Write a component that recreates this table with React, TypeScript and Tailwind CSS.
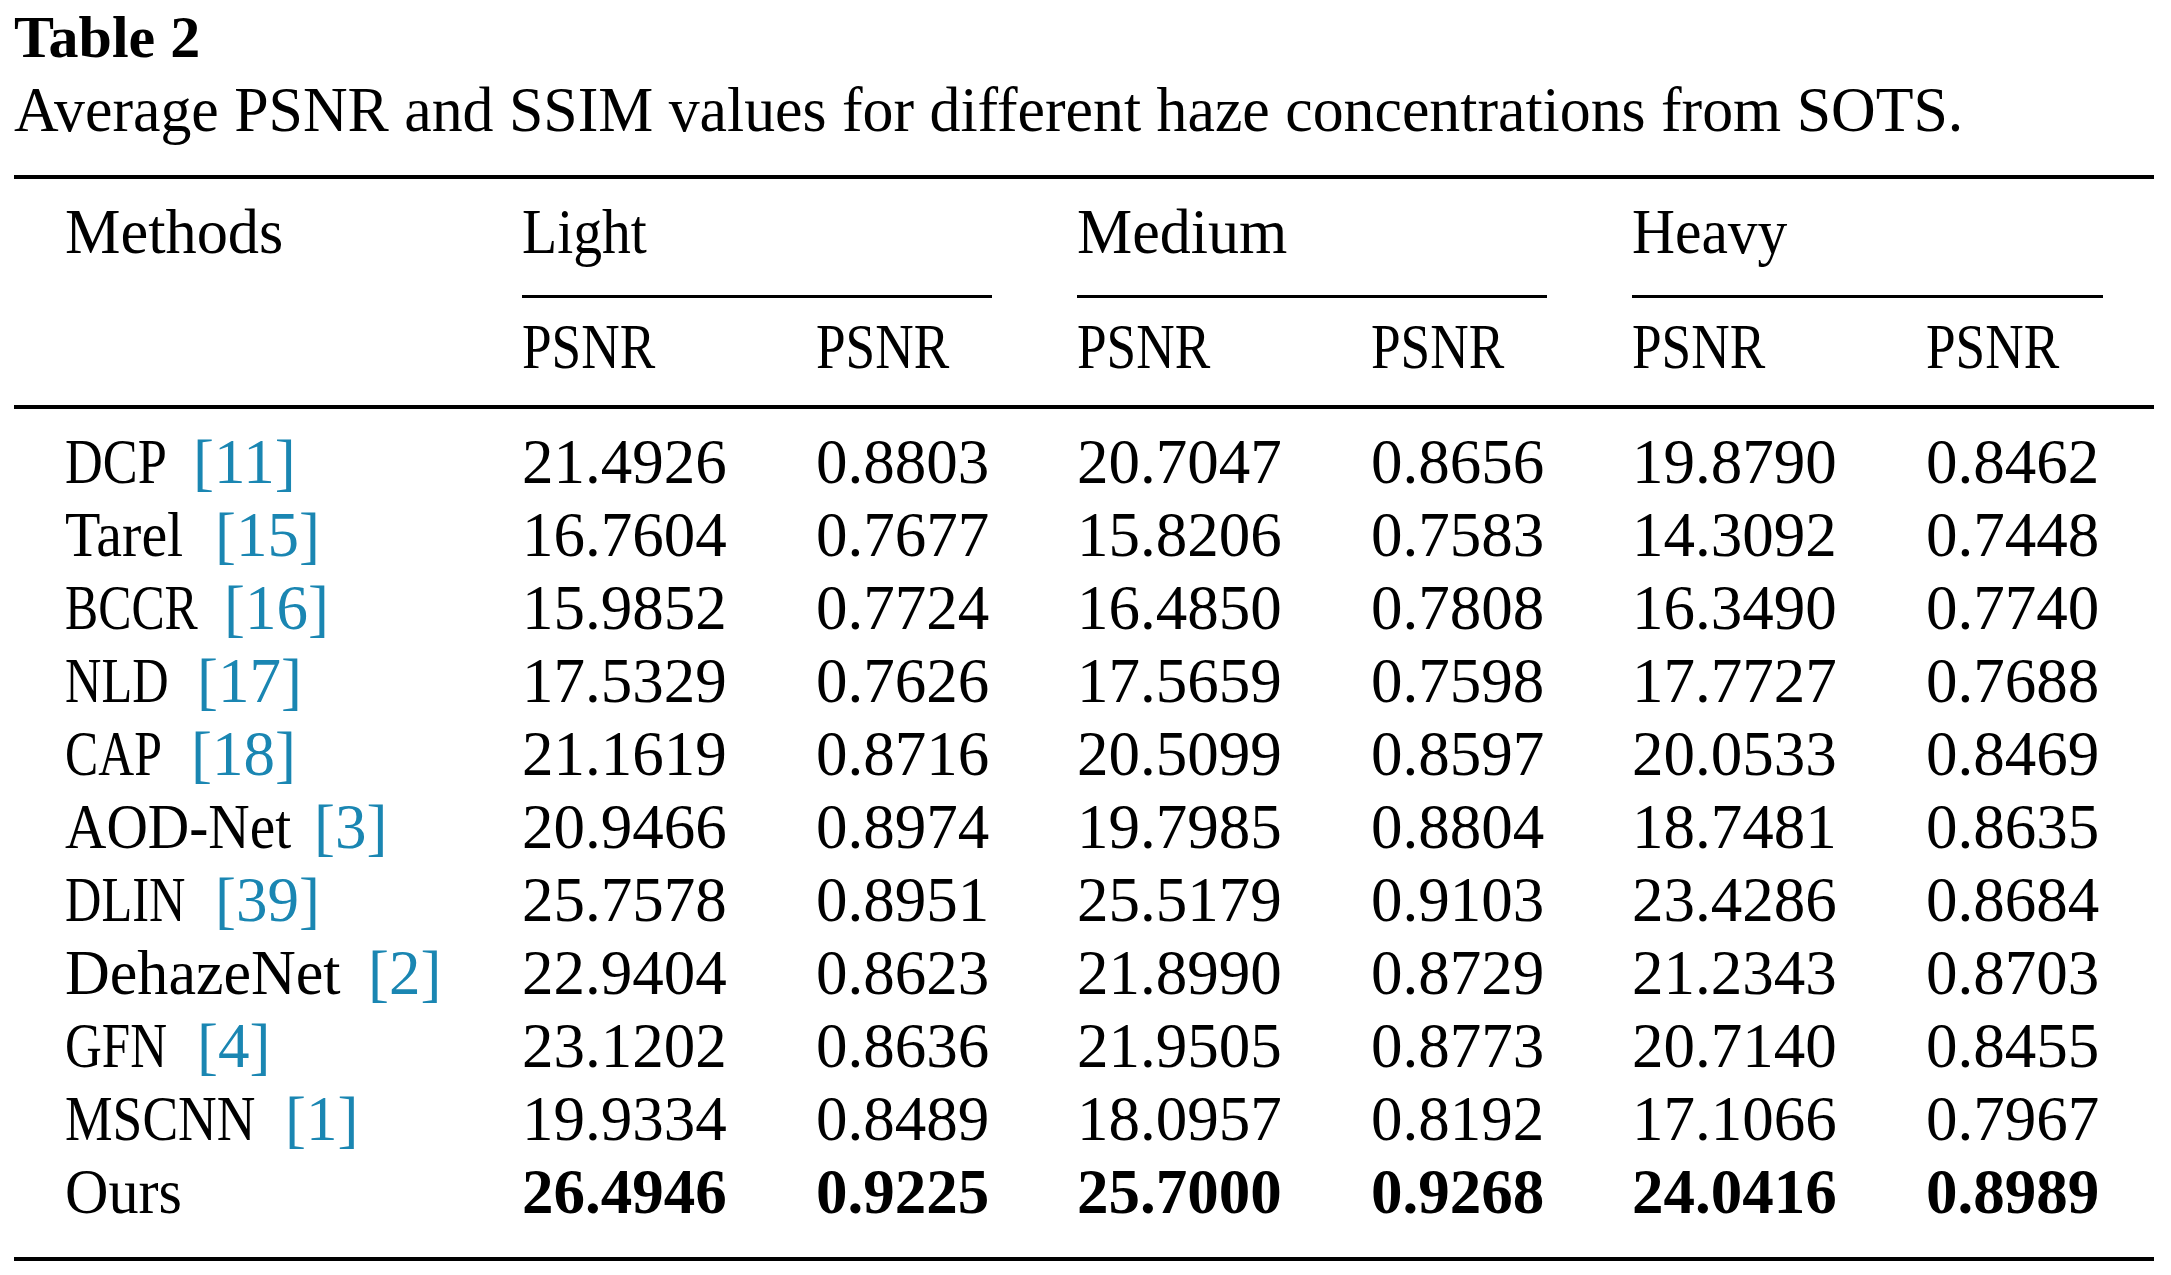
import React from "react";

type Row = { name: string; ref?: string; w: string; sx: string; vals: string[]; bold?: boolean };

const rows: Row[] = [
  { name: "DCP", ref: "[11]", w: "w-[128px]", sx: "scale-x-[0.83]", vals: ["21.4926", "0.8803", "20.7047", "0.8656", "19.8790", "0.8462"] },
  { name: "Tarel", ref: "[15]", w: "w-[150px]", sx: "scale-x-[0.92]", vals: ["16.7604", "0.7677", "15.8206", "0.7583", "14.3092", "0.7448"] },
  { name: "BCCR", ref: "[16]", w: "w-[159px]", sx: "scale-x-[0.79]", vals: ["15.9852", "0.7724", "16.4850", "0.7808", "16.3490", "0.7740"] },
  { name: "NLD", ref: "[17]", w: "w-[132px]", sx: "scale-x-[0.80]", vals: ["17.5329", "0.7626", "17.5659", "0.7598", "17.7727", "0.7688"] },
  { name: "CAP", ref: "[18]", w: "w-[126px]", sx: "scale-x-[0.79]", vals: ["21.1619", "0.8716", "20.5099", "0.8597", "20.0533", "0.8469"] },
  { name: "AOD-Net", ref: "[3]", w: "w-[249px]", sx: "scale-x-[0.91]", vals: ["20.9466", "0.8974", "19.7985", "0.8804", "18.7481", "0.8635"] },
  { name: "DLIN", ref: "[39]", w: "w-[150px]", sx: "scale-x-[0.80]", vals: ["25.7578", "0.8951", "25.5179", "0.9103", "23.4286", "0.8684"] },
  { name: "DehazeNet", ref: "[2]", w: "w-[303px]", sx: "scale-x-[0.985]", vals: ["22.9404", "0.8623", "21.8990", "0.8729", "21.2343", "0.8703"] },
  { name: "GFN", ref: "[4]", w: "w-[132px]", sx: "scale-x-[0.81]", vals: ["23.1202", "0.8636", "21.9505", "0.8773", "20.7140", "0.8455"] },
  { name: "MSCNN", ref: "[1]", w: "w-[220px]", sx: "scale-x-[0.85]", vals: ["19.9334", "0.8489", "18.0957", "0.8192", "17.1066", "0.7967"] },
  { name: "Ours", w: "w-[130px]", sx: "scale-x-[0.955]", vals: ["26.4946", "0.9225", "25.7000", "0.9268", "24.0416", "0.8989"], bold: true },
];

const grid =
  "grid grid-cols-[508px_294px_261px_294px_261px_294px_228px] w-[2140px]";

function Sx({ cls, children }: { cls: string; children: React.ReactNode }) {
  return <span className={`inline-block origin-left whitespace-nowrap ${cls}`}>{children}</span>;
}

export default function App() {
  return (
    <div
      className="bg-white text-black min-h-[1275px] w-[2171px] pl-[14px] pt-[1px]"
      style={{ fontFamily: '"Liberation Serif", "Times New Roman", serif' }}
    >
      <div className="text-[60px] leading-[73px] font-bold">Table 2</div>
      <div className="text-[63px] leading-[73px] whitespace-nowrap">
        <Sx cls="scale-x-[0.981]">
          Average PSNR and SSIM values for different haze concentrations from SOTS.
        </Sx>
      </div>

      <div className="mt-[28px] w-[2140px] h-[4px] bg-black" />

      {/* header row 1 */}
      <div className={`${grid} text-[63px] leading-[73px] pt-[17px]`}>
        <div className="pl-[51px]">
          <Sx cls="scale-x-[0.99]">Methods</Sx>
        </div>
        <div className="col-span-2">
          <Sx cls="scale-x-[0.915]">Light</Sx>
        </div>
        <div className="col-span-2">
          <Sx cls="scale-x-[0.985]">Medium</Sx>
        </div>
        <div className="col-span-2">
          <Sx cls="scale-x-[0.945]">Heavy</Sx>
        </div>
      </div>
      <div className={`${grid} pt-[26px]`}>
        <div />
        <div className="col-span-2 h-[3px] bg-black w-[470px]" />
        <div className="col-span-2 h-[3px] bg-black w-[470px]" />
        <div className="col-span-2 h-[3px] bg-black w-[471px]" />
      </div>
      {/* header row 2 */}
      <div className={`${grid} text-[63px] leading-[73px] pt-[13px]`}>
        <div />
        {[0, 1, 2, 3, 4, 5].map((i) => (
          <div key={i}>
            <Sx cls="scale-x-[0.845]">PSNR</Sx>
          </div>
        ))}
      </div>

      <div className="mt-[21px] w-[2140px] h-[4px] bg-black" />

      <div className="pt-[17px] pb-[28px]">
        {rows.map((r) => (
          <div key={r.name} className={`${grid} text-[63px] leading-[73px]`}>
            <div className="pl-[51px] flex whitespace-nowrap">
              <span className={`inline-block shrink-0 ${r.w}`}>
                <Sx cls={r.sx}>{r.name}</Sx>
              </span>
              {r.ref && <span className="text-[#1a86b2]">{r.ref}</span>}
            </div>
            {r.vals.map((v, i) => (
              <div key={i} className={r.bold ? "font-bold" : ""}>
                {v}
              </div>
            ))}
          </div>
        ))}
      </div>

      <div className="w-[2140px] h-[4px] bg-black" />
    </div>
  );
}
